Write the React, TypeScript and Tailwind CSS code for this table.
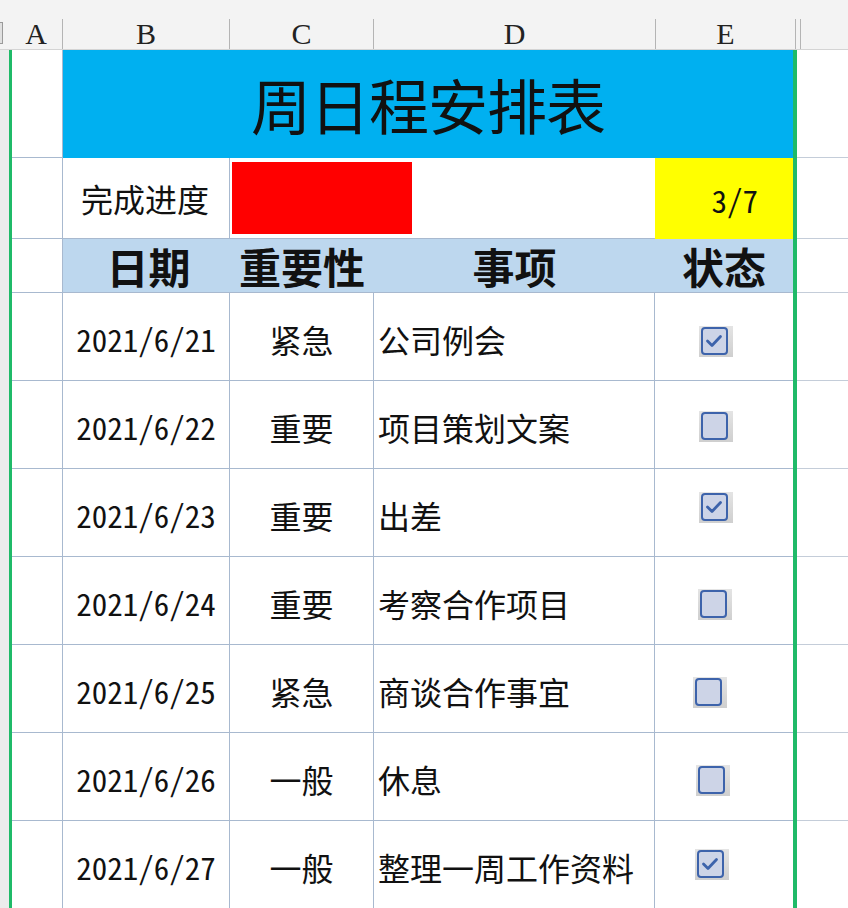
const cjk = "font-['Noto_Sans_CJK_SC',sans-serif]";
const num = "font-['Noto_Sans_CJK_SC',sans-serif] [font-feature-settings:'hwid']";

interface Task {
  date: string;
  level: string;
  task: string;
  done: boolean;
  box: string;
}

const tasks: Task[] = [
  { date: "2021/6/21", level: "紧急", task: "公司例会", done: true, box: "pt-[33px] pl-[44px]" },
  { date: "2021/6/22", level: "重要", task: "项目策划文案", done: false, box: "pt-[30px] pl-[44px]" },
  { date: "2021/6/23", level: "重要", task: "出差", done: true, box: "pt-[23px] pl-[44px]" },
  { date: "2021/6/24", level: "重要", task: "考察合作项目", done: false, box: "pt-[32px] pl-[43px]" },
  { date: "2021/6/25", level: "紧急", task: "商谈合作事宜", done: false, box: "pt-[32px] pl-[38px]" },
  { date: "2021/6/26", level: "一般", task: "休息", done: false, box: "pt-[32px] pl-[41px]" },
  { date: "2021/6/27", level: "一般", task: "整理一周工作资料", done: true, box: "pt-[28px] pl-[40px]" },
];

const columns = [
  { label: "B", w: "w-[166px]" },
  { label: "C", w: "w-[143px]" },
  { label: "D", w: "w-[281px]" },
  { label: "E", w: "w-[139px]" },
];

function Checkbox({ checked }: { checked: boolean }) {
  return (
    <div className="w-[34px] h-[31px] bg-gradient-to-b from-[#e4e4e4] to-[#cfcfcf] pt-[1px] pl-[2px]">
      <div className="w-[27px] h-[28px] rounded-[4px] border-2 border-[#3d63ab] bg-[#cdd4e7]">
        {checked && (
          <svg width="23" height="24" viewBox="0 0 23 24">
            <path
              d="M4.5 12 L9 16.5 L17.5 7.5"
              fill="none"
              stroke="#3d63ab"
              strokeWidth="2.8"
              strokeLinecap="round"
              strokeLinejoin="round"
            />
          </svg>
        )}
      </div>
    </div>
  );
}

// left gutter + green border, shared by every sheet row
function Edge() {
  return (
    <>
      <div className="w-[9px] shrink-0 bg-[#ececec]" />
      <div className="w-[3px] shrink-0 bg-[#1fba68]" />
    </>
  );
}

function RightEdge() {
  return (
    <>
      <div className="w-[4px] shrink-0 bg-[#1fba68]" />
      <div className="w-[51px] shrink-0 bg-white border-b border-[#c4cdd9]" />
    </>
  );
}

export default function App() {
  const line = "border-[#a8b9cf]";

  return (
    <div className={`w-[848px] h-[908px] overflow-hidden bg-white text-[#111] ${cjk}`}>
      {/* column letters */}
      <div className="flex h-[50px] bg-[#f3f3f3] border-b border-[#d4d4d4]">
        <div className="w-[10px] shrink-0 flex items-start pt-[22px]">
          <div className="w-[3px] h-[22px] border-y border-r border-[#9a9a9a] bg-[#e0e0e0]" />
        </div>
        <div className="w-[52px] shrink-0 flex items-end justify-center pb-0 text-[30px] leading-none font-['Liberation_Serif',serif] text-[#222]">
          A
        </div>
        {columns.map((c) => (
          <div key={c.label} className="flex shrink-0">
            <div className="w-px h-[30px] self-end bg-[#b4b4b4]" />
            <div
              className={`${c.w} flex items-end justify-center pb-0 text-[30px] leading-none font-['Liberation_Serif',serif] text-[#222]`}
            >
              {c.label}
            </div>
          </div>
        ))}
        <div className="w-px h-[30px] self-end bg-[#b4b4b4] shrink-0" />
        <div className="w-[4px] shrink-0" />
        <div className="w-px h-[30px] self-end bg-[#b4b4b4] shrink-0" />
        <div className="flex-1" />
      </div>

      {/* title */}
      <div className="flex h-[108px]">
        <Edge />
        <div className={`w-[51px] shrink-0 border-r border-b ${line}`} />
        <div className="w-[730px] shrink-0 bg-[#00b0f0] flex items-center justify-center text-[60px] leading-none tracking-[-1px]">
          周日程安排表
        </div>
        <RightEdge />
      </div>

      {/* progress */}
      <div className="flex h-[81px]">
        <Edge />
        <div className={`w-[51px] shrink-0 border-r border-b ${line}`} />
        <div className={`w-[167px] shrink-0 border-r border-b ${line} flex items-center pl-[18px] text-[32px] leading-none`}>
          完成进度
        </div>
        <div className={`w-[425px] shrink-0 border-b ${line} pt-[4px] pl-[2px]`}>
          <div className="w-[180px] h-[72px] bg-[#ff0000]" />
        </div>
        <div className="w-[138px] shrink-0 bg-[#ffff00] flex items-center justify-end pr-[35px] pt-[2px] text-[31px] leading-none">
          <span className={num}>3/7</span>
        </div>
        <RightEdge />
      </div>

      {/* column titles */}
      <div className="flex h-[54px]">
        <Edge />
        <div className={`w-[51px] shrink-0 border-r border-b ${line}`} />
        <div className={`flex w-[730px] shrink-0 bg-[#bdd7ee] border-b ${line} text-[42px] leading-none font-bold`}>
          <div className="w-[167px] flex items-center justify-center pl-[4px]">日期</div>
          <div className="w-[144px] flex items-center justify-center">重要性</div>
          <div className="w-[281px] flex items-center justify-center">事项</div>
          <div className="w-[138px] flex items-center justify-center">状态</div>
        </div>
        <RightEdge />
      </div>

      {/* tasks */}
      {tasks.map((t) => (
        <div key={t.date} className="flex h-[88px] shrink-0">
          <Edge />
          <div className={`w-[51px] shrink-0 border-r border-b ${line}`} />
          <div className={`w-[167px] shrink-0 border-r border-b ${line} flex items-center justify-center pt-[4px] text-[31px] leading-none`}>
            <span className={num}>{t.date}</span>
          </div>
          <div className={`w-[144px] shrink-0 border-r border-b ${line} flex items-center justify-center pt-[4px] text-[32px] leading-none`}>
            {t.level}
          </div>
          <div className={`w-[281px] shrink-0 border-r border-b ${line} flex items-center pl-[4px] pt-[4px] text-[32px] leading-none`}>
            {t.task}
          </div>
          <div className={`w-[138px] shrink-0 border-b ${line} ${t.box}`}>
            <Checkbox checked={t.done} />
          </div>
          <RightEdge />
        </div>
      ))}
    </div>
  );
}
